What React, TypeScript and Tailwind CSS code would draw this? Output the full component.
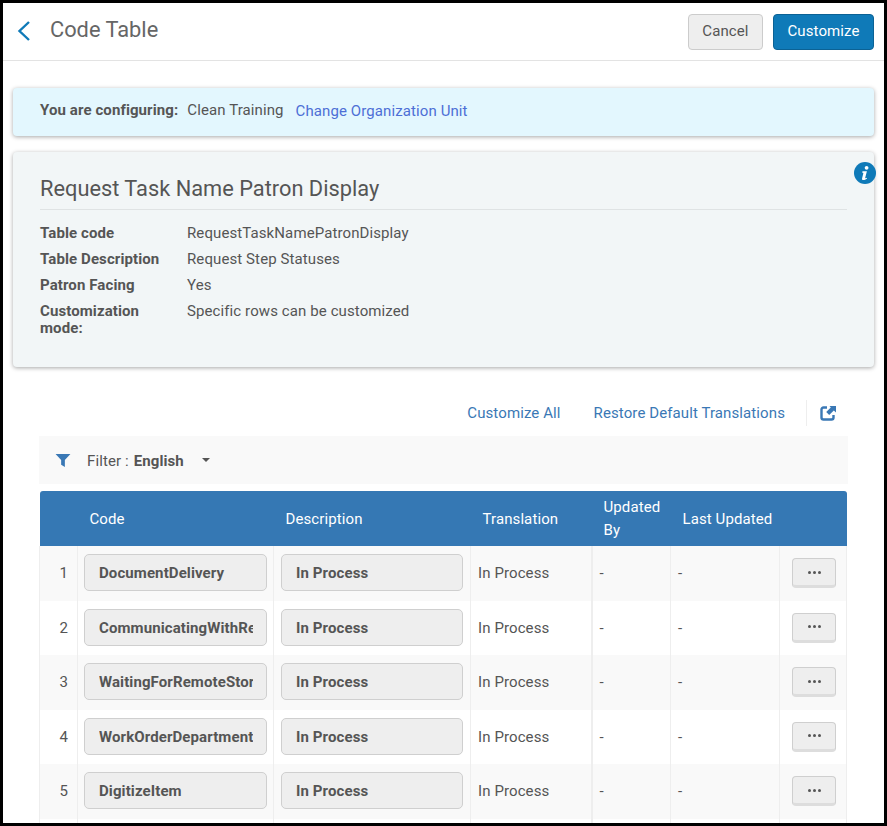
const rows = [
  { id: 1, code: "DocumentDelivery" },
  { id: 2, code: "CommunicatingWithRequester" },
  { id: 3, code: "WaitingForRemoteStorage" },
  { id: 4, code: "WorkOrderDepartment" },
  { id: 5, code: "DigitizeItem" },
  { id: 6, code: "OnHoldShelf" },
]

const details = [
  { label: "Table code", value: "RequestTaskNamePatronDisplay" },
  { label: "Table Description", value: "Request Step Statuses" },
  { label: "Patron Facing", value: "Yes" },
  { label: "Customization mode:", value: "Specific rows can be customized" },
]

function ReadonlyField({ value }: { value: string }) {
  return (
    <div className="mb-px h-[37px] rounded-[5px] border border-[#cfcfcf] bg-[#eeeeee] pl-[14px] pr-[13px] text-[15px] font-bold leading-[36px] text-[#555555]">
      <div className="overflow-hidden whitespace-nowrap">{value}</div>
    </div>
  )
}

export default function App() {
  return (
    <div className="h-[826px] w-[887px] overflow-hidden border-[3px] border-black bg-white font-['Roboto',sans-serif] text-[15px] tracking-[0.1px] text-[#555555]">
      <header className="flex h-[58px] items-center justify-between border-b border-[#e3e3e3] pl-[14px] pr-[10px]">
        <div className="flex items-center">
          <svg viewBox="0 0 14 20" className="mb-[2px] h-[20px] w-[14px]" fill="none">
            <path d="M12 1 2.5 10l9.5 9" stroke="#0f7ab8" strokeWidth="2.4" />
          </svg>
          <h1 className="mb-[2px] ml-[19px] text-[21.8px] font-normal tracking-normal text-[#666666]">Code Table</h1>
        </div>
        <div className="flex items-center gap-[10px]">
          <button className="h-[36px] w-[75px] rounded-[4px] border border-[#cccccc] bg-[#eeeeee] text-[#555555]">Cancel</button>
          <button className="h-[36px] w-[101px] rounded-[4px] border border-[#0b6295] bg-[#0f7ab8] text-white">Customize</button>
        </div>
      </header>

      <div className="pl-[10px] pr-[10px] pt-[27px]">
        <div className="flex h-[48px] items-center rounded-[4px] bg-[#e3f7fe] pb-[3px] pl-[27px] shadow-[0_1px_4px_rgba(0,0,0,0.35)]">
          <span className="font-bold">You are configuring:</span>
          <span className="ml-[9px]">Clean Training</span>
          <a className="ml-[12px] mt-[2px] text-[#4d6fd6]">Change Organization Unit</a>
        </div>

        <section className="relative mt-[16px] h-[215px] rounded-[4px] bg-[#f2f6f7] px-[27px] pt-[21px] shadow-[0_1px_4px_rgba(0,0,0,0.35)]">
          <svg viewBox="0 0 22 22" className="absolute right-[-2px] top-[10px] h-[22px] w-[22px]">
            <circle cx="11" cy="11" r="11" fill="#0f7ab8" />
            <circle cx="12.6" cy="5.8" r="1.9" fill="#ffffff" />
            <path d="M8.5 9.2h4.4l-1.7 6.6c-.1.5.4.6 1.6-.1l.3.8c-1.6 1.2-2.6 1.6-3.6 1.6-1.2 0-1.7-.7-1.4-1.9l1.2-4.8c.1-.6-.3-.7-1.1-.7z" fill="#ffffff" />
          </svg>
          <h2 className="h-[37px] border-b border-[#dfe3e4] text-[21.8px] font-normal leading-[32px] tracking-normal text-[#555555]">
            Request Task Name Patron Display
          </h2>
          <dl className="pt-[10px]">
            {details.map((d) => (
              <div key={d.label} className="flex min-h-[26px] leading-[17px] pt-[5px]">
                <dt className="w-[147px] shrink-0 pr-[20px] font-bold">{d.label}</dt>
                <dd>{d.value}</dd>
              </div>
            ))}
          </dl>
        </section>

        <div className="mx-[26px] mt-[26px]">
          <div className="flex h-[43px] items-center justify-end pb-[3px] text-[#3a78b5]">
            <a>Customize All</a>
            <a className="ml-[33px]">Restore Default Translations</a>
            <span className="ml-[21px] h-[26px] w-px bg-[#eeeeee]" />
            <svg viewBox="0 0 16 16" className="ml-[13px] mr-[12px] h-[16px] w-[16px]" fill="none">
              <path d="M7 2.5H3.5A2 2 0 0 0 1.5 4.5v8a2 2 0 0 0 2 2h8a2 2 0 0 0 2-2V10" stroke="#3a78b5" strokeWidth="2.4" />
              <path d="M9.5 1H16v6.5l-2.2-2.1-4.6 4.6-3-3 4.6-4.6z" fill="#3a78b5" />
            </svg>
          </div>

          <div className="flex h-[48px] items-center bg-[#f9f9f9] pl-[16px] pt-[2px]">
            <svg viewBox="0 0 16 14" className="mt-[-2px] h-[13px] w-[16px]">
              <path d="M0 0h16l-6 6.5V14l-4-2.5v-5z" fill="#3a78b5" />
            </svg>
            <span className="ml-[16px]">Filter :</span>
            <span className="ml-[5px] font-bold">English</span>
            <span className="ml-[18px] mt-[-2px] h-0 w-0 border-x-[4px] border-t-[4px] border-x-transparent border-t-[#555555]" />
          </div>

          <table className="mt-[7px] w-[807px] table-fixed border-collapse">
            <colgroup>
              <col className="w-[38px]" />
              <col className="w-[196px]" />
              <col className="w-[197px]" />
              <col className="w-[121px]" />
              <col className="w-[79px]" />
              <col className="w-[109px]" />
              <col className="w-[67px]" />
            </colgroup>
            <thead>
              <tr className="h-[55px] bg-[#3578b4] text-left text-white">
                <th className="rounded-tl-[3px]" />
                <th className="pl-[12px] pt-[1px] font-normal">Code</th>
                <th className="pl-[12px] pt-[1px] font-normal">Description</th>
                <th className="pl-[12px] pt-[1px] font-normal">Translation</th>
                <th className="pl-[12px] font-normal leading-[23px]">Updated By</th>
                <th className="pl-[12px] pt-[1px] font-normal">Last Updated</th>
                <th className="rounded-tr-[3px]" />
              </tr>
            </thead>
            <tbody>
              {rows.map((r) => (
                <tr key={r.id} className="h-[54.5px] odd:bg-[#f9f9f9] even:bg-white">
                  <td className="border-x border-[#eeeeee] pr-[9px] text-right">{r.id}</td>
                  <td className="border-r border-[#eeeeee] px-[6px]"><ReadonlyField value={r.code} /></td>
                  <td className="border-r border-[#eeeeee] px-[7px]"><ReadonlyField value="In Process" /></td>
                  <td className="border-r-2 border-[#eeeeee] pl-[7px]">In Process</td>
                  <td className="border-r border-[#eeeeee] pl-[7px]">-</td>
                  <td className="border-r border-[#eeeeee] pl-[7px]">-</td>
                  <td className="border-r border-[#eeeeee] pl-[12px]">
                    <button className="flex h-[30px] w-[44px] items-center justify-center gap-[2px] rounded-[4px] border border-[#cfcfcf] border-b-[3px] border-b-[#dddddd] bg-[#eeeeee]" aria-label="Row actions">
                      <span className="h-[3px] w-[3px] rounded-full bg-[#555555]" />
                      <span className="h-[3px] w-[3px] rounded-full bg-[#555555]" />
                      <span className="h-[3px] w-[3px] rounded-full bg-[#555555]" />
                    </button>
                  </td>
                </tr>
              ))}
            </tbody>
          </table>
        </div>
      </div>
    </div>
  )
}
